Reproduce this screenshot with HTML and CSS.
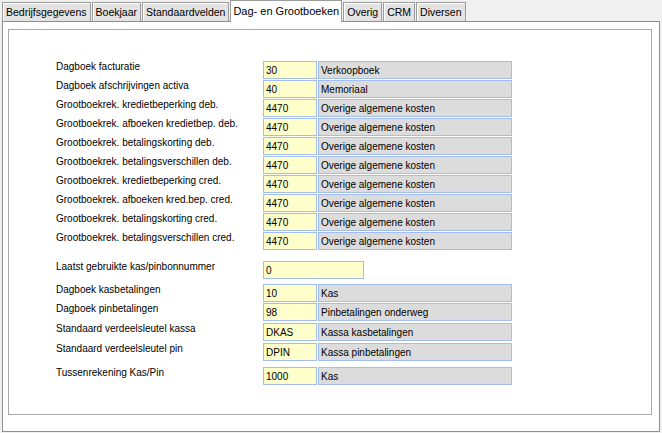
FILE: index.html
```html
<!DOCTYPE html>
<html>
<head>
<meta charset="utf-8">
<link rel="stylesheet" href="styles.css">
</head>
<body>
<div class="tabs">
  <div class="tab">Bedrijfsgegevens</div>
  <div class="tab">Boekjaar</div>
  <div class="tab">Standaardvelden</div>
  <div class="tab active">Dag- en Grootboeken</div>
  <div class="tab">Overig</div>
  <div class="tab">CRM</div>
  <div class="tab">Diversen</div>
</div>
<div class="panel">
  <div class="frame">
    <div class="group g1">
      <div class="row"><div class="label">Dagboek facturatie</div><div class="code">30</div><div class="desc">Verkoopboek</div></div>
      <div class="row"><div class="label">Dagboek afschrijvingen activa</div><div class="code">40</div><div class="desc">Memoriaal</div></div>
      <div class="row"><div class="label">Grootboekrek. kredietbeperking deb.</div><div class="code">4470</div><div class="desc">Overige algemene kosten</div></div>
      <div class="row"><div class="label">Grootboekrek. afboeken kredietbep. deb.</div><div class="code">4470</div><div class="desc">Overige algemene kosten</div></div>
      <div class="row"><div class="label">Grootboekrek. betalingskorting deb.</div><div class="code">4470</div><div class="desc">Overige algemene kosten</div></div>
      <div class="row"><div class="label">Grootboekrek. betalingsverschillen deb.</div><div class="code">4470</div><div class="desc">Overige algemene kosten</div></div>
      <div class="row"><div class="label">Grootboekrek. kredietbeperking cred.</div><div class="code">4470</div><div class="desc">Overige algemene kosten</div></div>
      <div class="row"><div class="label">Grootboekrek. afboeken kred.bep. cred.</div><div class="code">4470</div><div class="desc">Overige algemene kosten</div></div>
      <div class="row"><div class="label">Grootboekrek. betalingskorting cred.</div><div class="code">4470</div><div class="desc">Overige algemene kosten</div></div>
      <div class="row"><div class="label">Grootboekrek. betalingsverschillen cred.</div><div class="code">4470</div><div class="desc">Overige algemene kosten</div></div>
    </div>
    <div class="group g2">
      <div class="row"><div class="label">Laatst gebruikte kas/pinbonnummer</div><div class="code wide">0</div></div>
    </div>
    <div class="group g3">
      <div class="row"><div class="label">Dagboek kasbetalingen</div><div class="code">10</div><div class="desc">Kas</div></div>
      <div class="row"><div class="label">Dagboek pinbetalingen</div><div class="code">98</div><div class="desc">Pinbetalingen onderweg</div></div>
      <div class="row r-gap"><div class="label">Standaard verdeelsleutel kassa</div><div class="code">DKAS</div><div class="desc">Kassa kasbetalingen</div></div>
      <div class="row r-gap"><div class="label">Standaard verdeelsleutel pin</div><div class="code">DPIN</div><div class="desc">Kassa pinbetalingen</div></div>
    </div>
    <div class="group g4">
      <div class="row"><div class="label">Tussenrekening Kas/Pin</div><div class="code">1000</div><div class="desc">Kas</div></div>
    </div>
  </div>
</div>
</body>
</html>
```
FILE: styles.css
```css
html, body {
  margin: 0;
  padding: 0;
}
body {
  width: 662px;
  height: 433px;
  background: #f0f0f0;
  font-family: "Liberation Sans", Arial, sans-serif;
  color: #000;
  overflow: hidden;
}
.tabs {
  display: flex;
  align-items: flex-end;
  height: 21px;
  padding-left: 2px;
  position: relative;
  z-index: 2;
}
.tab {
  box-sizing: border-box;
  height: 19px;
  margin-right: 1px;
  padding: 0 3px;
  border: 1px solid #9c9c9c;
  border-bottom: none;
  background: #e3e3e3;
  box-shadow: inset 1px 1px 0 #ffffff;
  font-size: 10.5px;
  line-height: 18px;
  white-space: nowrap;
}
.tab.active {
  height: 22px;
  margin-bottom: -1px;
  padding: 0 2px;
  background: #ffffff;
  box-shadow: none;
  line-height: 21px;
  font-size: 11px;
}
.panel {
  box-sizing: border-box;
  width: 658px;
  height: 411px;
  margin-left: 2px;
  border: 1px solid #8e8e8e;
  background: #ffffff;
  padding: 7px 0 0 5px;
}
.frame {
  box-sizing: border-box;
  width: 644px;
  height: 386px;
  border: 1px solid #a8a8a8;
  padding: 31px 0 0 47px;
}
.group {
  display: flex;
  flex-direction: column;
  gap: 1px;
}
.g2 { margin-top: 11px; }
.g3 { margin-top: 5px; }
.g4 { margin-top: 6px; }
.r-gap { margin-top: 1px; }
.row {
  display: flex;
  height: 18px;
}
.label {
  width: 207px;
  font-size: 10px;
  line-height: 12px;
  white-space: nowrap;
}
.code, .desc {
  box-sizing: border-box;
  height: 18px;
  border: 1px solid #a3bdf0;
  font-size: 10px;
  line-height: 17px;
  padding: 0 2px;
  white-space: nowrap;
}
.code {
  width: 54px;
  background: #ffffcc;
}
.code.wide {
  width: 101px;
}
.desc {
  width: 194px;
  margin-left: 1px;
  background: #dcdcdc;
}
```
